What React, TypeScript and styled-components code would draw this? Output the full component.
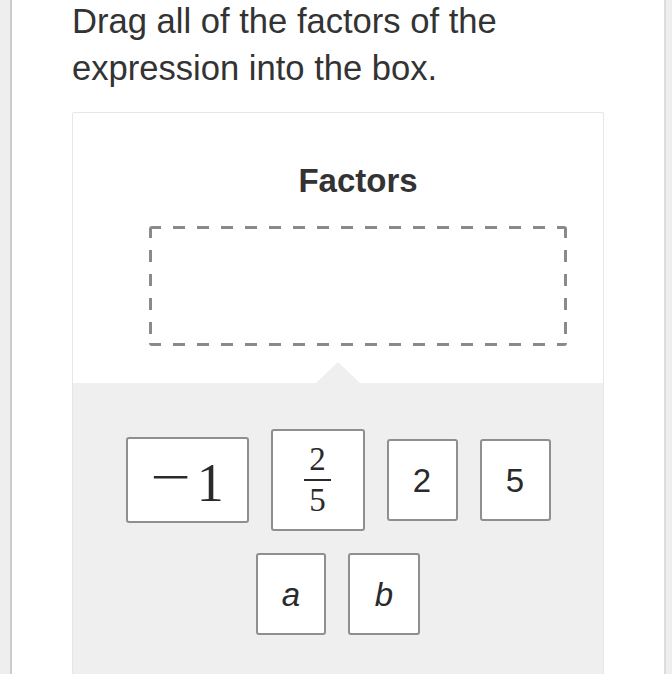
import { createGlobalStyle } from 'styled-components';
import styled from 'styled-components';

const GlobalStyle = createGlobalStyle`
  html, body {
    margin: 0;
    padding: 0;
    background: #eeeeee;
    overflow: hidden;
  }
`;

const Page = styled.div`
  height: 674px;
  padding: 0 6px 0 10px;
  box-sizing: border-box;
  overflow: hidden;
`;

const Panel = styled.div`
  height: 100%;
  box-sizing: border-box;
  overflow: hidden;
  background: #ffffff;
  border-left: 2px solid #cccccc;
  border-right: 2px solid #dddddd;
  padding: 0 60px;
  font-family: 'Liberation Sans', Helvetica, Arial, sans-serif;
  color: #333333;
`;

const Prompt = styled.p`
  margin: -2px 0 0 0;
  font-size: 34.6px;
  line-height: 47px;
`;

const Card = styled.div`
  margin-top: 20px;
  border: 1px solid #e6e6e6;
  border-bottom: none;
  border-radius: 2px 2px 0 0;
  display: flex;
  flex-direction: column;
`;

const DropArea = styled.div`
  padding: 48px 0 37px 40px;
  display: flex;
  flex-direction: column;
  align-items: center;
`;

const Title = styled.h2`
  margin: 0;
  font-size: 33px;
  line-height: 40px;
  font-weight: bold;
  color: #333333;
`;

const DashedBox = styled.div`
  margin-top: 25px;
  width: 418px;
  height: 120px;
  border-radius: 3px;
  background:
    linear-gradient(90deg, #8a8a8a 50%, transparent 50%) left top / 24px 3px repeat-x,
    linear-gradient(90deg, #8a8a8a 50%, transparent 50%) left bottom / 24px 3px repeat-x,
    linear-gradient(180deg, #8a8a8a 50%, transparent 50%) left top / 3px 24px repeat-y,
    linear-gradient(180deg, #8a8a8a 50%, transparent 50%) right top / 3px 24px repeat-y;
`;

const Tray = styled.div`
  position: relative;
  background: #efefef;
  padding: 46px 24px 60px;
  display: flex;
  flex-wrap: wrap;
  justify-content: center;
  align-items: center;
  gap: 22px;

  &::before {
    content: '';
    position: absolute;
    top: -21px;
    left: 50%;
    transform: translateX(-50%);
    border-left: 22px solid transparent;
    border-right: 22px solid transparent;
    border-bottom: 21px solid #efefef;
  }
`;

const Tile = styled.div<{ $w: number; $h: number }>`
  width: ${(p) => p.$w}px;
  height: ${(p) => p.$h}px;
  box-sizing: border-box;
  background: #ffffff;
  border: 2px solid #8f8f8f;
  border-radius: 3px;
  display: flex;
  align-items: center;
  justify-content: center;
  color: #2a2a2a;
`;

const MathNumber = styled.span`
  font-family: 'Liberation Serif', 'Times New Roman', serif;
  font-size: 54px;
  line-height: 1;
  margin-bottom: 6px;
  display: flex;
  align-items: baseline;
`;

const Minus = styled.span`
  display: inline-block;
  font-size: 72px;
  line-height: 1;
  margin-right: 6px;
  transform: scaleY(0.7);
`;

const Fraction = styled.span`
  display: inline-flex;
  flex-direction: column;
  align-items: center;
  font-family: 'Liberation Serif', 'Times New Roman', serif;
  font-size: 33px;
  line-height: 1;
`;

const FracBar = styled.span`
  width: 27px;
  height: 2px;
  background: #2a2a2a;
  margin: 3px 0;
`;

const Plain = styled.span<{ $italic?: boolean }>`
  font-family: 'Liberation Sans', Helvetica, Arial, sans-serif;
  font-size: 33px;
  font-style: ${(p) => (p.$italic ? 'italic' : 'normal')};
  line-height: 1;
`;

export default function App() {
  return (
    <>
      <GlobalStyle />
      <Page>
        <Panel>
          <Prompt>
            Drag all of the factors of the
            <br />
            expression into the box.
          </Prompt>
          <Card>
            <DropArea>
              <Title>Factors</Title>
              <DashedBox />
            </DropArea>
            <Tray>
              <Tile $w={123} $h={86}>
                <MathNumber>
                  <Minus>−</Minus>1
                </MathNumber>
              </Tile>
              <Tile $w={94} $h={102}>
                <Fraction>
                  <span>2</span>
                  <FracBar />
                  <span>5</span>
                </Fraction>
              </Tile>
              <Tile $w={71} $h={82}>
                <Plain>2</Plain>
              </Tile>
              <Tile $w={71} $h={82}>
                <Plain>5</Plain>
              </Tile>
              <Tile $w={70} $h={82}>
                <Plain $italic>a</Plain>
              </Tile>
              <Tile $w={72} $h={82}>
                <Plain $italic>b</Plain>
              </Tile>
            </Tray>
          </Card>
        </Panel>
      </Page>
    </>
  );
}
